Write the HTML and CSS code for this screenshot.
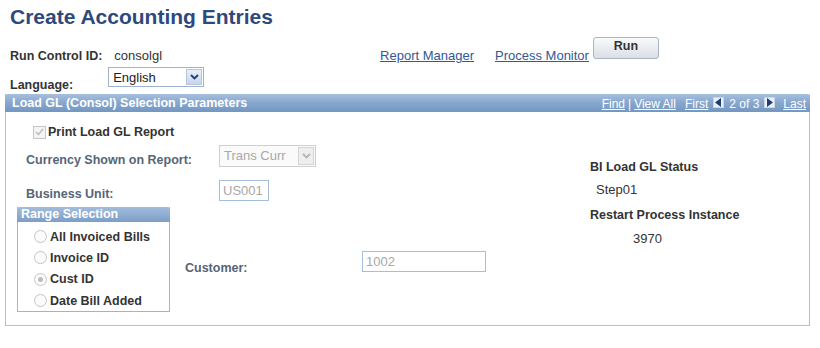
FILE: index.html
```html
<!DOCTYPE html>
<html lang="en">
<head>
    <meta charset="UTF-8">
    <title>Create Accounting Entries</title>
    <link rel="stylesheet" href="styles.css">
</head>
<body>
    <h1 class="page-title">Create Accounting Entries</h1>
    <div class="run-bar">
        <div class="run-row">
            <span class="label-dark">Run Control ID:</span>
            <span class="run-id">consolgl</span>
            <a href="#" class="top-link link-rm">Report Manager</a>
            <a href="#" class="top-link">Process Monitor</a>
            <button class="run-btn">Run</button>
        </div>
        <div class="lang-row">
            <span class="label-dark lang-label">Language:</span>
            <div class="select lang-select">
                <span>English</span>
                <span class="select-arrow">
                    <svg width="9" height="6" viewBox="0 0 9 6"><path d="M1 1 L4.5 4.5 L8 1" fill="none" stroke="#1d3f75" stroke-width="1.8"/></svg>
                </span>
            </div>
        </div>
    </div>

    <div class="panel">
        <div class="panel-header">
            <span>Load GL (Consol) Selection Parameters</span>
            <div class="panel-nav">
                <a href="#">Find</a><span class="sep">|</span><a href="#">View All</a>
                <a href="#" class="nav-first">First</a>
                <span class="nav-arrow"><svg width="7" height="9" viewBox="0 0 7 9"><path d="M6 0 L6 9 L0 4.5 Z" fill="#1d3f75"/></svg></span>
                <span class="nav-count">2 of 3</span>
                <span class="nav-arrow"><svg width="7" height="9" viewBox="0 0 7 9"><path d="M1 0 L1 9 L7 4.5 Z" fill="#1d3f75"/></svg></span>
                <a href="#" class="nav-last">Last</a>
            </div>
        </div>
        <div class="panel-body">
            <div class="left-col">
                <div class="check-row">
                    <span class="checkbox">
                        <svg width="9" height="8" viewBox="0 0 9 8"><path d="M1 4 L3.5 6.5 L8 1" fill="none" stroke="#b9b9b9" stroke-width="1.4"/></svg>
                    </span>
                    <span class="label-dark">Print Load GL Report</span>
                </div>
                <div class="field-row currency-row">
                    <span class="field-label">Currency Shown on Report:</span>
                    <div class="select select-disabled">
                        <span>Trans Curr</span>
                        <span class="select-arrow arrow-disabled">
                            <svg width="9" height="6" viewBox="0 0 9 6"><path d="M1 1 L4.5 4.5 L8 1" fill="none" stroke="#b5b5b5" stroke-width="1.8"/></svg>
                        </span>
                    </div>
                </div>
                <div class="field-row bu-row">
                    <span class="field-label">Business Unit:</span>
                    <div class="text-box bu-box">US001</div>
                </div>
                <div class="range-row">
                    <div class="group-box">
                        <div class="group-header">Range Selection</div>
                        <div class="group-body">
                            <div class="radio-item"><span class="radio"></span>All Invoiced Bills</div>
                            <div class="radio-item"><span class="radio"></span>Invoice ID</div>
                            <div class="radio-item"><span class="radio radio-on"></span>Cust ID</div>
                            <div class="radio-item"><span class="radio"></span>Date Bill Added</div>
                        </div>
                    </div>
                    <span class="field-label customer-label">Customer:</span>
                    <div class="text-box customer-box">1002</div>
                </div>
            </div>
            <div class="right-col">
                <div class="label-dark status-title">BI Load GL Status</div>
                <div class="status-value">Step01</div>
                <div class="label-dark status-title restart-title">Restart Process Instance</div>
                <div class="status-value instance-value">3970</div>
            </div>
        </div>
    </div>
</body>
</html>
```
FILE: styles.css
```css
body {
    margin: 0;
    font-family: "Liberation Sans", Arial, sans-serif;
    font-size: 13px;
    color: #333;
    background-color: #ffffff;
}
.page-title {
    margin: 4px 0 0 10px;
    font-size: 21px;
    line-height: 26px;
    color: #2d4a7a;
}
.run-bar {
    padding-left: 10px;
}
.run-row {
    display: flex;
    align-items: flex-end;
    height: 29px;
    margin-top: 6px;
}
.label-dark {
    font-weight: bold;
    font-size: 12.5px;
    color: #333;
}
.run-row .label-dark,
.run-id,
.top-link {
    margin-bottom: 2px;
}
.run-id {
    margin-left: 12px;
    color: #333;
}
.top-link {
    color: #31589a;
    text-decoration: underline;
}
.link-rm {
    margin-left: 218px;
    margin-right: 21px;
}
.run-btn {
    margin-left: 4px;
    margin-bottom: 6px;
    width: 66px;
    height: 22px;
    padding: 0 0 4px 0;
    font-family: "Liberation Sans", Arial, sans-serif;
    font-size: 12.5px;
    font-weight: bold;
    color: #333;
    border: 1px solid #aab4c2;
    border-radius: 3px;
    background: linear-gradient(#fafafa, #e6e9ee 60%, #dcdfe5);
    cursor: pointer;
}
.lang-row {
    display: flex;
    align-items: flex-start;
    height: 29px;
}
.lang-label {
    margin-top: 13px;
}
.lang-select {
    margin-left: 35px;
    margin-top: 2px;
    width: 96px;
}
.select {
    box-sizing: border-box;
    height: 20px;
    border: 1px solid #9fb3cf;
    display: flex;
    align-items: center;
    justify-content: space-between;
    padding-left: 4px;
    font-size: 13px;
    color: #222;
}
.select-arrow {
    width: 16px;
    height: 16px;
    margin-right: 1px;
    display: flex;
    align-items: center;
    justify-content: center;
    background: linear-gradient(#e8effa, #c7d6ec);
    border: 1px solid #b5c6de;
    box-sizing: border-box;
}
.panel {
    margin-left: 5px;
    width: 805px;
    height: 232px;
    box-sizing: border-box;
    border: 1px solid #a9c1df;
    border-top: none;
}
.panel-header {
    height: 18px;
    margin: 0 -1px;
    padding: 0 4px 0 7px;
    display: flex;
    align-items: center;
    justify-content: space-between;
    background: linear-gradient(#a6bfdd, #86a6cd 50%, #7397c3);
    border-radius: 3px 3px 0 0;
    color: #ffffff;
    font-weight: bold;
    font-size: 12.5px;
}
.panel-nav {
    display: flex;
    align-items: center;
    font-size: 12px;
    font-weight: normal;
    padding-top: 2px;
}
.panel-nav a {
    color: #ffffff;
    text-decoration: underline;
}
.sep {
    margin: 0 3px;
}
.nav-first {
    margin-left: 9px;
    margin-right: 5px;
}
.nav-arrow {
    width: 11px;
    height: 11px;
    box-sizing: border-box;
    background: #eef2f8;
    border: 1px solid #c9d5e6;
    display: flex;
    align-items: center;
    justify-content: center;
    margin-bottom: 3px;
}
.nav-count {
    margin: 0 5px;
}
.nav-last {
    margin-left: 8px;
}
.panel-body {
    display: flex;
}
.left-col {
    width: 569px;
    padding-left: 11px;
}
.check-row {
    display: flex;
    align-items: center;
    margin-top: 13px;
    margin-left: 16px;
    height: 14px;
}
.checkbox {
    width: 13px;
    height: 13px;
    box-sizing: border-box;
    border: 1px solid #c6c6c6;
    background: #f4f4f4;
    margin-right: 2px;
    display: flex;
    align-items: center;
    justify-content: center;
}
.field-row {
    display: grid;
    grid-template-columns: 193px auto;
    align-items: center;
    padding-left: 9px;
}
.field-label {
    font-weight: bold;
    font-size: 12.5px;
    color: #566577;
}
.currency-row {
    margin-top: 5px;
}
.currency-row .field-label {
    padding-top: 9px;
}
.select-disabled {
    width: 97px;
    height: 22px;
    border-color: #cfcfcf;
    color: #a8a8a8;
    background: #fafafa;
}
.arrow-disabled {
    background: #eeeeee;
    border-color: #d4d4d4;
    height: 18px;
}
.bu-row {
    margin-top: 12px;
}
.bu-row .field-label {
    padding-top: 8px;
}
.text-box {
    box-sizing: border-box;
    height: 21px;
    border: 1px solid #a4bedd;
    padding: 2px 3px;
    font-size: 13px;
    color: #a8a8a8;
}
.bu-box {
    width: 50px;
}
.range-row {
    display: flex;
    align-items: flex-start;
    margin-top: 6px;
}
.group-box {
    width: 153px;
    box-sizing: border-box;
    border: 1px solid #9db5d5;
    border-top: none;
}
.group-header {
    height: 15px;
    margin: 0 -1px;
    padding-left: 4px;
    line-height: 15px;
    background: linear-gradient(#a3bcdc, #7d9ec8);
    border-radius: 3px 3px 0 0;
    color: #ffffff;
    font-weight: bold;
    font-size: 12.5px;
}
.group-body {
    padding: 4px 0 0 16px;
}
.radio-item {
    display: flex;
    align-items: center;
    height: 21.3px;
    font-weight: bold;
    font-size: 12.5px;
    color: #333;
}
.radio {
    width: 13px;
    height: 13px;
    box-sizing: border-box;
    border: 1px solid #c4c4c4;
    border-radius: 50%;
    background: #fbfbfb;
    margin-right: 3px;
    display: flex;
    align-items: center;
    justify-content: center;
}
.radio-on::after {
    content: "";
    width: 5px;
    height: 5px;
    border-radius: 50%;
    background: #bdbdbd;
}
.customer-label {
    margin-left: 15px;
    margin-top: 54px;
    width: 177px;
}
.customer-box {
    margin-top: 44px;
    width: 124px;
}
.right-col {
    padding-left: 4px;
    padding-top: 48px;
}
.status-title {
    height: 14px;
}
.status-value {
    margin-top: 8px;
    margin-left: 6px;
    height: 14px;
    color: #333;
}
.restart-title {
    margin-top: 12px;
}
.instance-value {
    margin-left: 43px;
    margin-top: 9px;
}
```
